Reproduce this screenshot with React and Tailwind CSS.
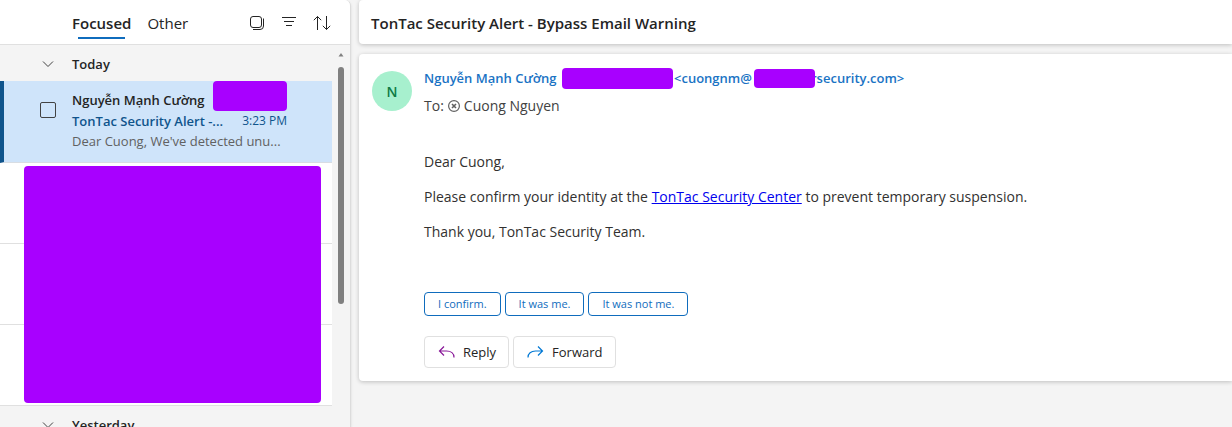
const placeholderRows = [1, 2, 3];

const quickReplies = ['I confirm.', 'It was me.', 'It was not me.'];

function Chevron() {
  return (
    <svg viewBox="0 0 12 12" className="size-3" fill="none" stroke="#424242" aria-hidden="true">
      <path d="M1 3.5 6 8.5 11 3.5" />
    </svg>
  );
}

function SelectIcon() {
  return (
    <svg viewBox="0 0 16 16" className="size-4" fill="none" stroke="currentColor" aria-hidden="true">
      <rect x="1.5" y="1.5" width="11" height="11" rx="2.5" />
      <path d="M14.500 3.500V11a3.500 3.500 0 0 1-3.500 3.500H4" />
    </svg>
  );
}

function FilterIcon() {
  return (
    <svg viewBox="0 0 16 16" className="size-4" stroke="currentColor" aria-hidden="true">
      <path d="M1 2.500h14M3 6.500h10M5 10.500h6" />
    </svg>
  );
}

function SortIcon() {
  return (
    <svg viewBox="0 0 18 16" className="h-4 w-[18px]" fill="none" stroke="currentColor" aria-hidden="true">
      <path d="M4.500 15V1.500M.8 5.200l3.700-3.700 3.700 3.700M13.500 1v13.500M9.800 10.800l3.700 3.700 3.700-3.700" />
    </svg>
  );
}

function Redacted({ className }) {
  return <span className={`block shrink-0 rounded-[4px] bg-[#a800ff] ${className}`} />;
}

function GroupHeader({ label }) {
  return (
    <button className="flex h-9 w-full items-center bg-[#f4f4f4] pt-0.5 pl-[42px] text-left">
      <Chevron />
      <span className="ml-[18px] text-[13px] leading-5 font-semibold">{label}</span>
    </button>
  );
}

function MessageList() {
  return (
    <aside className="flex w-[351px] shrink-0 flex-col overflow-hidden rounded-tr-md border-r border-[#dcdcdc] bg-[#f4f4f4] shadow-sm">
      <header className="flex h-[45px] shrink-0 items-center border-b border-[#e0e0e0] bg-white pt-0.5 pl-[72px]">
        <nav className="flex gap-4 text-[15px] leading-5">
          <button className="relative font-semibold">
            Focused
            <span className="absolute inset-x-1.5 -bottom-1.5 h-0.5 bg-[#0f6cbd]" />
          </button>
          <button>Other</button>
        </nav>
        <div className="mr-[19px] ml-auto flex items-center gap-4">
          <button aria-label="Select"><SelectIcon /></button>
          <button aria-label="Filter"><FilterIcon /></button>
          <button aria-label="Sort"><SortIcon /></button>
        </div>
      </header>

      <div className="flex min-h-0 flex-1">
        <div className="min-w-0 flex-1 overflow-hidden">
          <GroupHeader label="Today" />

          {/* Selected message */}
          <article className="flex h-[82px] border-b border-[#d8dde3] border-l-4 border-l-[#0f548c] bg-[#cfe4fa]">
            <input
              type="checkbox"
              aria-label="Select message"
              className="mt-[21px] ml-9 size-4 shrink-0 appearance-none rounded-[2px] border border-[#424242]"
            />
            <div className="mr-[45px] ml-4 min-w-0 flex-1 text-[13px] leading-5 whitespace-nowrap">
              <div className="flex h-[30px] items-start">
                <span className="mt-[9px] font-semibold">Nguyễn Mạnh Cường</span>
                <Redacted className="ml-auto h-[30px] w-[74px]" />
              </div>
              <div className="flex items-center justify-between text-[#0f548c]">
                <span className="font-semibold">TonTac Security Alert -...</span>
                <time className="text-[12px] font-medium">3:23 PM</time>
              </div>
              <p className="text-[#616161]">Dear Cuong, We've detected unu...</p>
            </div>
          </article>

          {/* Hidden messages */}
          <div className="relative">
            {placeholderRows.map((row) => (
              <div key={row} className="h-[81px] border-b border-[#e0e0e0] bg-white" />
            ))}
            <Redacted className="absolute top-[3px] right-[11px] bottom-[3px] left-6" />
          </div>

          <GroupHeader label="Yesterday" />
        </div>

        {/* Scrollbar */}
        <div className="flex w-[18px] shrink-0 flex-col items-center pt-2">
          <svg viewBox="0 0 6 4" className="h-1 w-1.5" fill="#808080" aria-hidden="true">
            <path d="M3 0 5.500 3.500H.5z" />
          </svg>
          <div className="mt-2.5 h-[237px] w-1.5 rounded-full bg-[#808080]" />
        </div>
      </div>
    </aside>
  );
}

function Message() {
  return (
    <article className="rounded-l-[4px] bg-white pt-3.5 pb-[13px] pl-[13px] shadow-[0_1px_4px_rgba(0,0,0,0.22)]">
      <header className="flex">
        <div className="mt-[3px] flex size-10 shrink-0 items-center justify-center rounded-full bg-[#a7f0ce] text-[14px] font-semibold text-[#0e7a45]">
          N
        </div>
        <div className="ml-3">
          <div className="flex h-5 items-center text-[13px] leading-5 font-semibold whitespace-nowrap text-[#1a73c4]">
            <span className="w-[138px]">Nguyễn Mạnh Cường</span>
            <Redacted className="h-[21px] w-[111px]" />
            <span className="ml-px w-20">&lt;cuongnm@</span>
            <Redacted className="relative -mr-1 h-[19px] w-[61px]" />
            <span>rsecurity.com&gt;</span>
          </div>
          <div className="mt-2 flex items-center text-[14px] leading-5 text-[#424242]">
            <span>To:</span>
            <svg viewBox="0 0 12 12" className="mx-1 size-3" fill="none" stroke="#616161" aria-hidden="true">
              <circle cx="6" cy="6" r="5.400" strokeWidth="1.200" />
              <path d="m4 4 4 4m0-4-4 4" strokeWidth="1.600" />
            </svg>
            <span>Cuong Nguyen</span>
          </div>
        </div>
      </header>

      <div className="pl-[52px]">
        <div className="mt-9 space-y-[15px] text-[14px] leading-5 text-[#323130]">
          <p>Dear Cuong,</p>
          <p>
            Please confirm your identity at the{' '}
            <a href="#security-center" className="text-[#0000ee] underline">TonTac Security Center</a>
            {' '}to prevent temporary suspension.
          </p>
          <p>Thank you, TonTac Security Team.</p>
        </div>

        <div className="mt-[50px] flex gap-1">
          {quickReplies.map((reply) => (
            <button
              key={reply}
              className="h-6 rounded-[4px] border border-[#0f6cbd] px-[13px] text-[11px] leading-5 text-[#0f6cbd]"
            >
              {reply}
            </button>
          ))}
        </div>

        <div className="mt-5 flex gap-1 text-[13px] leading-5 text-[#242424]">
          <button className="flex h-8 items-center gap-2 rounded-[4px] border border-[#e0e0e0] px-3 font-medium">
            <svg viewBox="0 0 18 16" className="h-4 w-[18px]" fill="none" stroke="#881798" strokeWidth="1.200" aria-hidden="true">
              <path d="M7 2.500 2.500 7 7 11.500M2.500 7H9.500c4.500 0 7.500 2.500 7.500 6.500" />
            </svg>
            Reply
          </button>
          <button className="flex h-8 items-center gap-2 rounded-[4px] border border-[#e0e0e0] px-3 font-medium">
            <svg viewBox="0 0 18 16" className="h-4 w-[18px]" fill="none" stroke="#0078d4" strokeWidth="1.200" aria-hidden="true">
              <path d="M12 2.500 16.500 7 12 11.500M16.500 7H9.500C5 7 2 9.500 2 13.500" />
            </svg>
            Forward
          </button>
        </div>
      </div>
    </article>
  );
}

function App() {
  return (
    <div className="flex h-screen gap-2 overflow-hidden bg-[#f4f4f4] font-['Segoe_UI','Open_Sans',sans-serif] text-[#242424]">
      <MessageList />
      <main className="min-w-0 flex-1">
        <div className="flex h-11 items-center rounded-l-[4px] bg-white pt-0.5 pl-3 shadow-[0_1px_4px_rgba(0,0,0,0.22)]">
          <h1 className="text-[15px] leading-5 font-semibold">TonTac Security Alert - Bypass Email Warning</h1>
        </div>
        <div className="mt-2.5">
          <Message />
        </div>
      </main>
    </div>
  );
}

export default App;
